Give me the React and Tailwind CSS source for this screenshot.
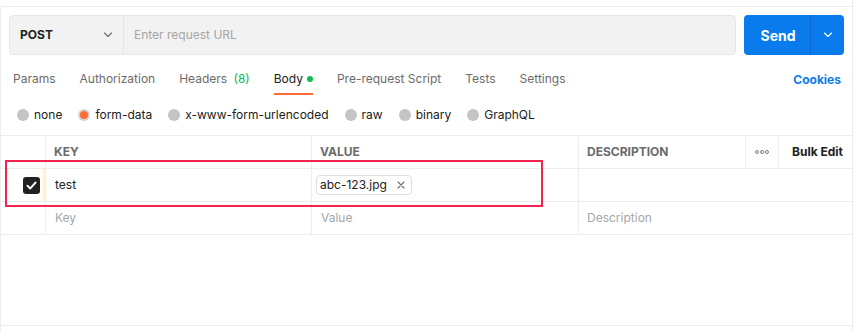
import React from "react";

const Chevron = ({ className = "", color = "#6b6b6b" }) => (
  <svg width="10" height="6" viewBox="0 0 10 6" className={className} fill="none">
    <path d="M1.5 1l3.5 3.5L8.5 1" stroke={color} strokeWidth="1.1" strokeLinecap="round" strokeLinejoin="round" />
  </svg>
);

const Radio = ({ label, selected }) => (
  <div className="flex items-center gap-[5px]">
    {selected ? (
      <span className="w-[12px] h-[12px] rounded-full bg-[#d4d4d4] flex items-center justify-center">
        <span className="w-[8px] h-[8px] rounded-full bg-[#ff6c37]" />
      </span>
    ) : (
      <span className="w-[12px] h-[12px] rounded-full bg-[#c4c4c4]" />
    )}
    <span className="text-[12px] text-[#212121]">{label}</span>
  </div>
);

export default function App() {
  const tabs = ["Params", "Authorization", "Headers", "Body", "Pre-request Script", "Tests", "Settings"];
  return (
    <div
      className="w-[864px] h-[331px] bg-white overflow-hidden"
      style={{ fontFamily: "Inter, 'Noto Sans', sans-serif" }}
    >
      <div className="w-[853px] pt-[6px] border-r border-[#ededed] h-[326px]">
        <div className="border-t border-l border-b border-[#ededed] h-[320px] flex flex-col relative">
          {/* URL bar */}
          <div className="flex px-[8px] pt-[8px] gap-[8px]">
            <div className="flex w-[728px] h-[40px] rounded-[4px] border border-[#e6e6e6] bg-[#f2f2f2]">
              <div className="w-[114px] flex items-center justify-between pl-[10px] pr-[10px] border-r border-[#e6e6e6]">
                <span className="text-[12px] font-bold text-[#212121]">POST</span>
                <Chevron />
              </div>
              <div className="flex items-center pl-[10px] text-[12px] text-[#a6a6a6]">Enter request URL</div>
            </div>
            <div className="flex w-[100px] h-[40px] rounded-[4px] bg-[#097bed] text-white">
              <div className="w-[67px] flex items-center justify-center pl-[2px] text-[14px] font-bold border-r border-[#0868cc]">
                Send
              </div>
              <div className="flex-1 flex items-center justify-center">
                <Chevron color="#ffffff" />
              </div>
            </div>
          </div>

          {/* Tabs */}
          <div className="flex items-center justify-between pl-[12px] pr-[11px] pt-[7px]">
            <div className="flex gap-[24px]">
              {tabs.map((t) => (
                <div
                  key={t}
                  className={`h-[33px] flex items-center text-[12px] border-b-2 pt-[2px] ${
                    t === "Body" ? "border-[#ff6c37] text-[#212121]" : "border-transparent text-[#6b6b6b]"
                  }`}
                >
                  {t === "Headers" ? (
                    <span>
                      Headers <span className="ml-[3px] text-[#0cbb52]">(8)</span>
                    </span>
                  ) : t === "Body" ? (
                    <span className="flex items-center gap-[4px]">
                      Body <span className="w-[6px] h-[6px] rounded-full bg-[#0cbb52]" />
                    </span>
                  ) : (
                    t
                  )}
                </div>
              ))}
            </div>
            <span className="text-[12px] font-bold text-[#097bed] pt-[2px]">Cookies</span>
          </div>

          {/* Radios */}
          <div className="h-[40px] flex items-center gap-[16px] pl-[16px]">
            <Radio label="none" />
            <Radio label="form-data" selected />
            <Radio label="x-www-form-urlencoded" />
            <Radio label="raw" />
            <Radio label="binary" />
            <Radio label="GraphQL" />
          </div>

          {/* Table */}
          <div className="grid grid-cols-[45px_266px_267px_167px_33px_1fr] border-t border-[#ededed] text-[12px]">
            {/* header */}
            <div className="h-[33px] border-r border-b border-[#ededed]" />
            <div className="h-[33px] border-r border-b border-[#ededed] flex items-center pl-[8px] text-[12px] font-bold text-[#6b6b6b]">KEY</div>
            <div className="h-[33px] border-r border-b border-[#ededed] flex items-center pl-[8px] text-[12px] font-bold text-[#6b6b6b]">VALUE</div>
            <div className="h-[33px] border-r border-b border-[#ededed] flex items-center pl-[8px] text-[12px] font-bold text-[#6b6b6b]">DESCRIPTION</div>
            <div className="h-[33px] border-r border-b border-[#ededed] flex items-center justify-center">
              <svg width="14" height="4" viewBox="0 0 14 4" fill="none">
                <circle cx="2" cy="2" r="1.5" stroke="#6b6b6b" strokeWidth="0.9" />
                <circle cx="7" cy="2" r="1.5" stroke="#6b6b6b" strokeWidth="0.9" />
                <circle cx="12" cy="2" r="1.5" stroke="#6b6b6b" strokeWidth="0.9" />
              </svg>
            </div>
            <div className="h-[33px] border-b border-[#ededed] flex items-center pl-[13px] text-[12px] font-bold text-[#212121]">Bulk Edit</div>

            {/* row 1 */}
            <div className="h-[33px] border-r border-b border-[#ededed] flex items-center justify-end">
              <span className="w-[17px] h-[17px] rounded-[3px] bg-[#212121] flex items-center justify-center mr-[1px]">
                <svg width="11" height="9" viewBox="0 0 11 9" fill="none">
                  <path d="M1.5 4.8l2.8 2.6L9.5 1.6" stroke="#fff" strokeWidth="2" strokeLinecap="round" strokeLinejoin="round" />
                </svg>
              </span>
              <span className="w-[3px] h-full ml-[1px] bg-[#fdf5dc]" />
            </div>
            <div className="h-[33px] border-r border-b border-[#ededed] flex items-center pl-[9px] text-[#212121]">test</div>
            <div className="h-[33px] border-r border-b border-[#ededed] flex items-center pl-[4px]">
              <span className="h-[20px] flex items-center gap-[10px] pl-[3px] pr-[6px] border border-[#e0e0e0] rounded-[4px] text-[#212121]">
                abc-123.jpg
                <svg width="8" height="8" viewBox="0 0 8 8" fill="none">
                  <path d="M1 1l6 6M7 1L1 7" stroke="#6b6b6b" strokeWidth="1.1" strokeLinecap="round" />
                </svg>
              </span>
            </div>
            <div className="col-span-3 h-[33px] border-b border-[#ededed]" />

            {/* row 2 */}
            <div className="h-[33px] border-r border-b border-[#ededed]" />
            <div className="h-[33px] border-r border-b border-[#ededed] flex items-center pl-[9px] text-[#a6a6a6]">Key</div>
            <div className="h-[33px] border-r border-b border-[#ededed] flex items-center pl-[9px] text-[#a6a6a6]">Value</div>
            <div className="col-span-3 h-[33px] border-b border-[#ededed] flex items-center pl-[8px] text-[#a6a6a6]">Description</div>
          </div>

          {/* highlight */}
          <div className="absolute left-[4px] top-[153px] w-[538px] h-[47px] border-2 border-[#f5234e]" />
        </div>
      </div>
      <div className="w-[853px] border-l border-r border-[#ededed] h-[5px]" />
    </div>
  );
}
